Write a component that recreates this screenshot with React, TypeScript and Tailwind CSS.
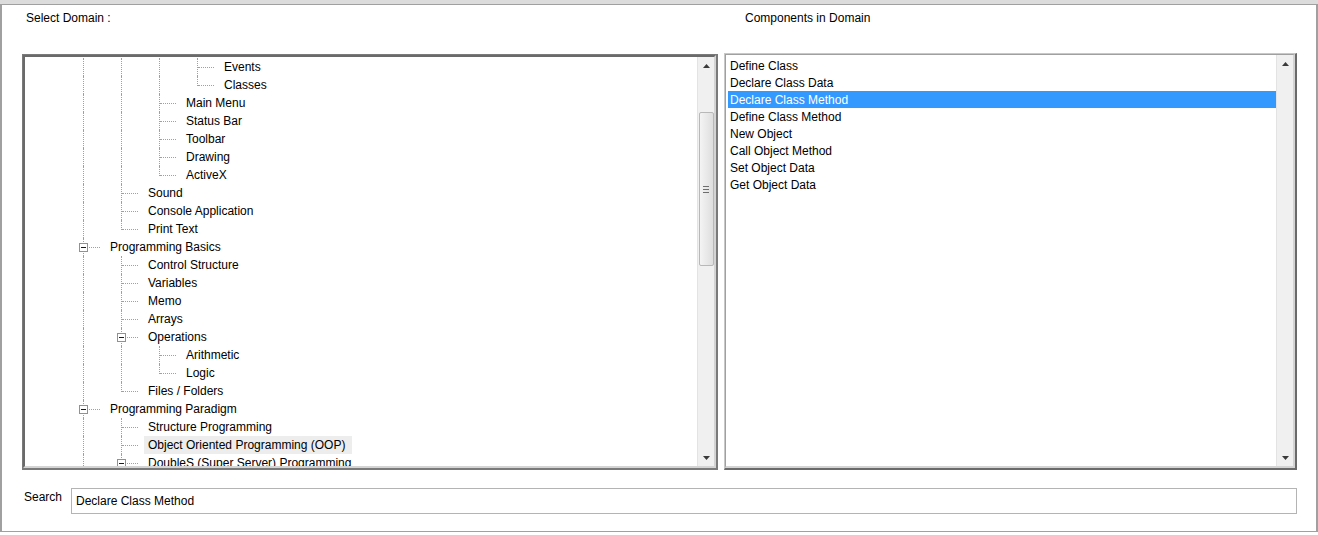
import React from "react";

type Row = {
  label: string;
  anc: boolean[];
  last?: boolean;
  box?: boolean;
  hl?: boolean;
};

const C = true;

const rows: Row[] = [
  { label: "Events", anc: [C, C, C] },
  { label: "Classes", anc: [C, C, C], last: true },
  { label: "Main Menu", anc: [C, C] },
  { label: "Status Bar", anc: [C, C] },
  { label: "Toolbar", anc: [C, C] },
  { label: "Drawing", anc: [C, C] },
  { label: "ActiveX", anc: [C, C], last: true },
  { label: "Sound", anc: [C] },
  { label: "Console Application", anc: [C] },
  { label: "Print Text", anc: [C], last: true },
  { label: "Programming Basics", anc: [], box: true },
  { label: "Control Structure", anc: [C] },
  { label: "Variables", anc: [C] },
  { label: "Memo", anc: [C] },
  { label: "Arrays", anc: [C] },
  { label: "Operations", anc: [C], box: true },
  { label: "Arithmetic", anc: [C, C] },
  { label: "Logic", anc: [C, C], last: true },
  { label: "Files / Folders", anc: [C], last: true },
  { label: "Programming Paradigm", anc: [], box: true },
  { label: "Structure Programming", anc: [C] },
  { label: "Object Oriented Programming (OOP)", anc: [C], hl: true },
  { label: "DoubleS (Super Server) Programming", anc: [C], box: true },
];

const items = [
  "Define Class",
  "Declare Class Data",
  "Declare Class Method",
  "Define Class Method",
  "New Object",
  "Call Object Method",
  "Set Object Data",
  "Get Object Data",
];

function TreeRow({ r }: { r: Row }) {
  return (
    <div className="flex h-[18px] shrink-0 items-stretch">
      <div className="w-[39px] shrink-0" />
      {r.anc.map((c, i) => (
        <div key={i} className="relative w-[38px] shrink-0">
          {c && (
            <div className="absolute left-[19px] top-0 h-full border-l border-dotted border-[#a0a0a0]" />
          )}
        </div>
      ))}
      <div className="relative w-[38px] shrink-0">
        <div
          className={
            r.last
              ? "absolute left-[19px] top-0 h-[10px] border-l border-dotted border-[#a0a0a0]"
              : "absolute left-[19px] top-0 h-full border-l border-dotted border-[#a0a0a0]"
          }
        />
        <div className="absolute left-[20px] top-[9px] w-[16px] border-t border-dotted border-[#a0a0a0]" />
        {r.box && (
          <div className="absolute left-[15px] top-[5px] flex h-[9px] w-[9px] items-center justify-center border border-[#919191] bg-white">
            <div className="h-px w-[5px] bg-[#1a1a1a]" />
          </div>
        )}
      </div>
      <div
        className={
          r.hl
            ? "ml-[4px] whitespace-nowrap bg-[#ededed] pl-[4px] pr-[7px] pt-[1px] leading-[17px] text-black"
            : "ml-[4px] whitespace-nowrap pl-[4px] pr-[7px] pt-[1px] leading-[17px] text-black"
        }
      >
        {r.label}
      </div>
    </div>
  );
}

function UpArrow() {
  return (
    <svg width="7" height="4" viewBox="0 0 7 4">
      <path d="M0 4 L3.5 0 L7 4 Z" fill="#3a3a3a" />
    </svg>
  );
}

function DownArrow() {
  return (
    <svg width="7" height="4" viewBox="0 0 7 4">
      <path d="M0 0 L7 0 L3.5 4 Z" fill="#3a3a3a" />
    </svg>
  );
}

function VScroll({ thumb }: { thumb?: boolean }) {
  return (
    <div className="flex w-[17px] shrink-0 flex-col border-l border-[#e3e3e3] bg-[#f0f0f0]">
      <div className="flex h-[17px] shrink-0 items-center justify-center">
        <UpArrow />
      </div>
      <div className="flex flex-1 flex-col items-center">
        {thumb && (
          <>
            <div className="h-[38px] shrink-0" />
            <div className="flex h-[154px] w-[15px] shrink-0 flex-col items-center justify-center gap-[2px] rounded-[2px] border border-[#b8b8b8] bg-gradient-to-r from-[#f4f4f4] to-[#dedede]">
              <div className="h-px w-[6px] bg-[#6e6e6e]" />
              <div className="h-px w-[6px] bg-[#6e6e6e]" />
              <div className="h-px w-[6px] bg-[#6e6e6e]" />
            </div>
          </>
        )}
      </div>
      <div className="flex h-[17px] shrink-0 items-center justify-center">
        <DownArrow />
      </div>
    </div>
  );
}

export default function App() {
  return (
    <div className="h-[535px] w-[1318px] overflow-hidden bg-white font-['Liberation_Sans',Arial,sans-serif] text-[12px] text-black">
      <div className="h-[4px] bg-[#dcdcdc]" />
      <div className="flex h-[528px] flex-col border-b border-l-2 border-r-2 border-t border-[#a0a0a0]">
        {/* header */}
        <div className="flex h-[47px] shrink-0 pt-[6px] leading-[15px]">
          <div className="ml-[20px] w-[696px] pl-[4px]">Select Domain :</div>
          <div className="ml-[6px] pl-[21px]">Components in Domain</div>
        </div>

        {/* panels */}
        <div className="flex h-[418px] shrink-0 items-start">
          {/* tree panel */}
          <div className="ml-[20px] mt-[2px] flex h-[416px] w-[696px] border-b-2 border-l border-r-2 border-t border-[#7a7a7a]">
            <div className="flex min-w-0 flex-1 border-b-2 border-l-2 border-r-2 border-t-2 border-b-[#d4d4d4] border-l-[#6a6a6a] border-r-[#d4d4d4] border-t-[#6a6a6a]">
              <div className="flex min-w-0 flex-1 flex-col overflow-hidden pt-[1px]">
                {rows.map((r, i) => (
                  <TreeRow key={i} r={r} />
                ))}
              </div>
              <VScroll thumb />
            </div>
          </div>

          {/* list panel */}
          <div className="ml-[6px] mt-[1px] flex h-[417px] w-[573px] border-b-2 border-l border-r-2 border-t border-b-[#6a6a6a] border-l-[#c8c8c8] border-r-[#6a6a6a] border-t-[#c8c8c8]">
            <div className="flex min-w-0 flex-1 border-b-2 border-l border-r-2 border-t border-b-[#d4d4d4] border-l-[#a0a0a0] border-r-[#d4d4d4] border-t-[#a0a0a0]">
              <div className="flex min-w-0 flex-1 flex-col pl-[2px] pt-[2px]">
                {items.map((t, i) => (
                  <div
                    key={i}
                    className={
                      i === 2
                        ? "h-[17px] shrink-0 bg-[#3399ff] pl-[2px] pt-[1px] leading-[16px] text-white"
                        : "h-[17px] shrink-0 pl-[2px] pt-[1px] leading-[16px] text-black"
                    }
                  >
                    {t}
                  </div>
                ))}
              </div>
              <VScroll />
            </div>
          </div>
        </div>

        {/* search */}
        <div className="mt-[18px] flex items-start">
          <div className="ml-[22px] w-[47px] pt-[2px] leading-[15px]">Search</div>
          <div className="flex h-[26px] w-[1226px] items-center border border-[#b4b4b4] pl-[4px] leading-[15px]">
            Declare Class Method
          </div>
        </div>
      </div>
    </div>
  );
}
